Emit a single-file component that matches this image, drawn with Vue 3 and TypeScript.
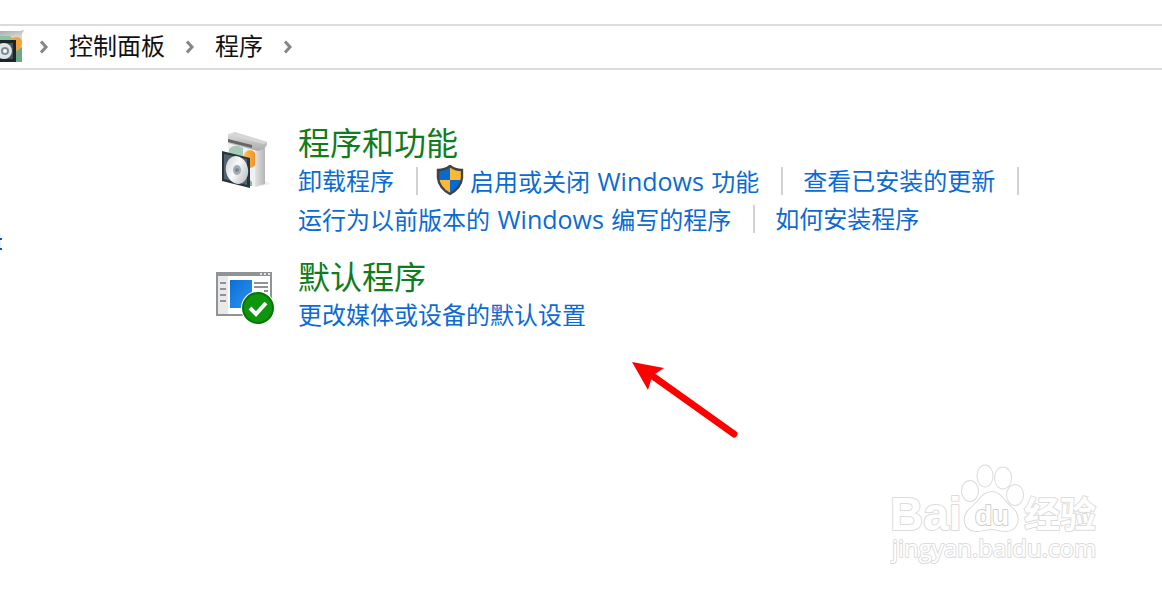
<script setup lang="ts">
interface Task {
  text: string
  shield?: boolean
}
interface Category {
  id: string
  title: string
  tasks: Task[]
}
interface Part {
  text: string
  latin: boolean
}

const crumbs: string[] = ['控制面板', '程序']

const categories: Category[] = [
  {
    id: 'features',
    title: '程序和功能',
    tasks: [
      { text: '卸载程序' },
      { text: '启用或关闭 Windows 功能', shield: true },
      { text: '查看已安装的更新' },
      { text: '运行为以前版本的 Windows 编写的程序' },
      { text: '如何安装程序' },
    ],
  },
  {
    id: 'defaults',
    title: '默认程序',
    tasks: [{ text: '更改媒体或设备的默认设置' }],
  },
]

// Latin words are set slightly larger than the Chinese text around them.
function splitParts(text: string): Part[] {
  return text
    .split(/( [A-Za-z]+ )/)
    .filter((piece) => piece !== '')
    .map((piece) => ({ text: piece, latin: /[A-Za-z]/.test(piece) }))
}
</script>

<template>
  <div class="window">
    <nav class="address" aria-label="地址栏">
      <svg class="place" width="24" height="34" viewBox="0 0 24 34" aria-hidden="true">
        <defs>
          <linearGradient id="lid" x1="0" y1="0" x2="1" y2="1">
            <stop offset="0" stop-color="#a8a8a8" />
            <stop offset="1" stop-color="#d8d8d8" />
          </linearGradient>
        </defs>
        <path d="M0 2L20 1L22 3V32H0Z" fill="#d6d8d3" />
        <path d="M0 1H20L24 0L21 6H0Z" fill="url(#lid)" />
        <path d="M0 6H10L14 10H0Z" fill="#8cc3a2" />
        <path d="M16 20L22 17V32H16Z" fill="#6fa888" />
        <path d="M12 8Q21 5 22 12Q22 19 16 21V11H12Z" fill="#f3a13b" />
        <path d="M0 10H16V32H0Z" fill="#1d252a" />
        <path d="M0 13H13V29H0Z" fill="#46545d" />
        <circle cx="4" cy="21" r="8" fill="#dfe5e8" />
        <circle cx="5" cy="21" r="4" fill="#7f8c94" />
        <circle cx="5" cy="21" r="2" fill="#fff" />
      </svg>
      <svg class="chevron" width="10" height="14" viewBox="0 0 10 14" aria-hidden="true">
        <path d="M2 1.5L7 7L2 12.5" />
      </svg>
      <template v-for="crumb in crumbs" :key="crumb">
        <a class="crumb" href="#">{{ crumb }}</a>
        <svg class="chevron" width="10" height="14" viewBox="0 0 10 14" aria-hidden="true">
          <path d="M2 1.5L7 7L2 12.5" />
        </svg>
      </template>
    </nav>

    <div class="body">
      <aside class="side">
        <svg width="3" height="16" viewBox="0 0 3 16" aria-hidden="true">
          <path d="M0 0H1V16H0Z" fill="#dff3ff" />
          <path d="M0 4H2M0 14H2" stroke="#1e50b4" stroke-width="2" />
        </svg>
      </aside>

      <main class="list">
        <section v-for="category in categories" :key="category.id" class="category">
          <svg
            v-if="category.id === 'features'"
            class="icon"
            width="60"
            height="66"
            viewBox="0 4 60 66"
            aria-hidden="true"
          >
            <defs>
              <linearGradient id="box-side" x1="0" x2="1">
                <stop offset="0" stop-color="#e4e4e4" />
                <stop offset="1" stop-color="#b5b5b5" />
              </linearGradient>
              <linearGradient id="box-top" x1="0" y1="0" x2="0" y2="1">
                <stop offset="0" stop-color="#e0e0e0" />
                <stop offset="1" stop-color="#aaaaaa" />
              </linearGradient>
              <linearGradient id="disc" x1="0" y1="0" x2="1" y2="1">
                <stop offset="0" stop-color="#c5cdd1" />
                <stop offset="0.45" stop-color="#fafafa" />
                <stop offset="1" stop-color="#a9b4ba" />
              </linearGradient>
              <linearGradient id="orange" x1="0" x2="1">
                <stop offset="0" stop-color="#ffc34f" />
                <stop offset="1" stop-color="#ec8a25" />
              </linearGradient>
            </defs>
            <path d="M45 62L55 60L50 57Z" fill="#eeeeee" />
            <path d="M12 15L42 21V63L12 57Z" fill="#f0f0f0" />
            <path d="M13 25Q19 19 27 24V38L13 34Z" fill="#a5cbb9" />
            <ellipse cx="34" cy="35" rx="7" ry="9" fill="url(#orange)" />
            <path d="M33 55L36 58V62H33Z" fill="#7fb696" />
            <path d="M39 22L49 21V60L39 63Z" fill="url(#box-side)" />
            <path d="M12 10L19 8L51 18V21L48 25L42 27L12 19Z" fill="url(#box-top)" />
            <path d="M12 15L36 21V24L12 18Z" fill="#666" />
            <path d="M18 8L51 18L48 20L16 12Z" fill="#d6d6d6" />
            <path d="M6 27L34 34V64L6 57Z" fill="#27343d" />
            <path d="M8 30L31 35V61L8 55Z" fill="#53636d" />
            <ellipse cx="21" cy="46" rx="11" ry="14" fill="url(#disc)" transform="rotate(-12 21 46)" />
            <ellipse cx="21" cy="46" rx="4" ry="5" fill="#a2adb3" />
            <ellipse cx="21" cy="46" rx="2" ry="2" fill="#7c878d" />
          </svg>
          <svg v-else class="icon" width="60" height="66" viewBox="0 0 60 66" aria-hidden="true">
            <defs>
              <linearGradient id="pane" x1="0" y1="0" x2="1" y2="1">
                <stop offset="0" stop-color="#0a6fd6" />
                <stop offset="1" stop-color="#2e94f0" />
              </linearGradient>
            </defs>
            <rect x="1" y="11" width="54" height="42" fill="#fff" stroke="#8f9396" stroke-width="2" />
            <path d="M1 12H55" stroke="#8f9396" stroke-width="4" />
            <path d="M44 12H46M48 12H50M52 12H54" stroke="#fff" stroke-width="1.5" />
            <rect x="2" y="14" width="10" height="38" fill="#e9e9e9" />
            <path d="M4 21H10M4 27H10M4 33H10M4 39H10M38 21H52M38 25H52M48 29H52" stroke="#8f9396" stroke-width="2" />
            <rect x="14" y="18" width="22" height="28" fill="url(#pane)" />
            <circle cx="42" cy="46" r="17" fill="#fff" />
            <circle cx="42" cy="46" r="15" fill="#0d960d" stroke="#087408" stroke-width="2" />
            <path d="M34 46L40 52L50 41" fill="none" stroke="#fff" stroke-width="4" />
          </svg>

          <div class="content">
            <h2 class="title"><a href="#">{{ category.title }}</a></h2>
            <ul class="tasks">
              <li v-for="task in category.tasks" :key="task.text" class="task">
                <a class="link" href="#">
                  <svg
                    v-if="task.shield"
                    class="shield"
                    width="28"
                    height="32"
                    viewBox="0 1 28 32"
                    aria-hidden="true"
                  >
                    <defs>
                      <clipPath id="shield-clip">
                        <path d="M14 2Q19 6 26 6V14Q25 24 14 30Q3 24 2 14V6Q9 6 14 2Z" />
                      </clipPath>
                    </defs>
                    <g clip-path="url(#shield-clip)">
                      <path d="M0 0H14V16H0ZM14 16H28V32H14Z" fill="#0869cf" />
                      <path d="M14 0H28V16H14ZM0 16H14V32H0Z" fill="#fdb833" />
                    </g>
                    <path
                      d="M14 2Q19 6 26 6V14Q25 24 14 30Q3 24 2 14V6Q9 6 14 2Z"
                      fill="none"
                      stroke="#404346"
                      stroke-width="2.4"
                    />
                  </svg>
                  <span class="label"><span
                    v-for="part in splitParts(task.text)"
                    :key="part.text"
                    :class="{ latin: part.latin }"
                  >{{ part.text }}</span></span>
                </a>
              </li>
            </ul>
          </div>
        </section>
      </main>
    </div>

    <svg class="arrow" width="108" height="80" viewBox="0 0 108 80" aria-hidden="true">
      <path d="M24 17L104 74" stroke="#fe0000" stroke-width="7" stroke-linecap="round" />
      <path d="M2 2L34 8L25 14L21 20L18 30Z" fill="#fe0000" />
    </svg>

    <svg class="watermark" width="212" height="106" viewBox="0 0 212 106" role="img" aria-label="Baidu 经验">
      <g class="outline">
        <text class="brand" x="0" y="66" font-size="46">Bai</text>
        <ellipse cx="80" cy="27" rx="8" ry="10" />
        <ellipse cx="95" cy="12" rx="7.5" ry="10.5" />
        <ellipse cx="113" cy="14" rx="8" ry="10.5" />
        <ellipse cx="125" cy="31" rx="8" ry="10" />
        <path d="M102 28C111 28 114 38 122 44C132 52 128 67 116 67C109 67 106 65 102 65C97 65 94 67 87 67C73 67 71 52 81 44C89 38 92 28 102 28Z" />
        <text class="brand inner" x="85" y="61" font-size="28">du</text>
        <text class="brand" x="134" y="64" font-size="36">经验</text>
        <text class="domain" x="2" y="93" font-size="24">jingyan.baidu.com</text>
      </g>
    </svg>
  </div>
</template>

<style>
body {
  margin: 0;
  background: #fff;
}
</style>

<style scoped>
.window {
  position: relative;
  min-height: 100vh;
  box-sizing: border-box;
  padding-top: 24px;
  overflow: hidden;
  background: #fff;
  font-family: "Open Sans", "Noto Sans CJK SC", sans-serif;
  font-size: 24px;
}

a {
  color: inherit;
  text-decoration: none;
}

.address {
  display: flex;
  align-items: center;
  height: 42px;
  border-top: 2px solid #dcdcdc;
  border-bottom: 2px solid #dcdcdc;
}

.place {
  margin-right: 15px;
}

.chevron {
  fill: none;
  stroke: #858585;
  stroke-width: 3;
}

.crumb {
  margin: 0 20px;
  padding-bottom: 2px;
  line-height: 38px;
  color: #111;
}

.body {
  display: flex;
  padding-top: 54px;
}

.side {
  flex: 0 0 216px;
  padding-top: 111px;
}

.side svg {
  display: block;
}

.list {
  flex: 1;
  display: flex;
  flex-direction: column;
  gap: 20px;
}

.category {
  display: flex;
  gap: 22px;
}

.icon {
  flex: none;
  margin-top: 4px;
}

.content {
  flex: 1;
}

.title {
  margin: 0;
  font-size: 32px;
  font-weight: 400;
  line-height: 38px;
  color: #107c20;
}

.tasks {
  display: flex;
  flex-wrap: wrap;
  margin: 0;
  padding: 0;
  list-style: none;
}

.task {
  display: flex;
  align-items: center;
  height: 38px;
  line-height: 38px;
  color: #0b6bd3;
}

.task:not(:last-child)::after {
  content: "";
  width: 2px;
  height: 28px;
  margin: 0 20px 0 22px;
  background: #d2d2d2;
}

.link {
  display: flex;
  align-items: center;
  gap: 6px;
}

.shield {
  margin-left: -2px;
}

.label {
  white-space: pre;
}

.latin {
  margin: 0 1px;
  font-size: 25px;
}

.arrow {
  position: absolute;
  left: 630px;
  top: 360px;
  fill: none;
}

.watermark {
  position: absolute;
  right: 60px;
  bottom: 20px;
}

.outline {
  fill: #fff;
  stroke: #dcdcdc;
  stroke-width: 2;
  stroke-linejoin: round;
  paint-order: stroke;
}

.inner {
  stroke: #cfcfcf;
}

.brand {
  font-family: "Liberation Sans", "Noto Sans CJK SC", sans-serif;
  font-weight: 700;
}

.domain {
  font-family: "Open Sans", sans-serif;
}
</style>
